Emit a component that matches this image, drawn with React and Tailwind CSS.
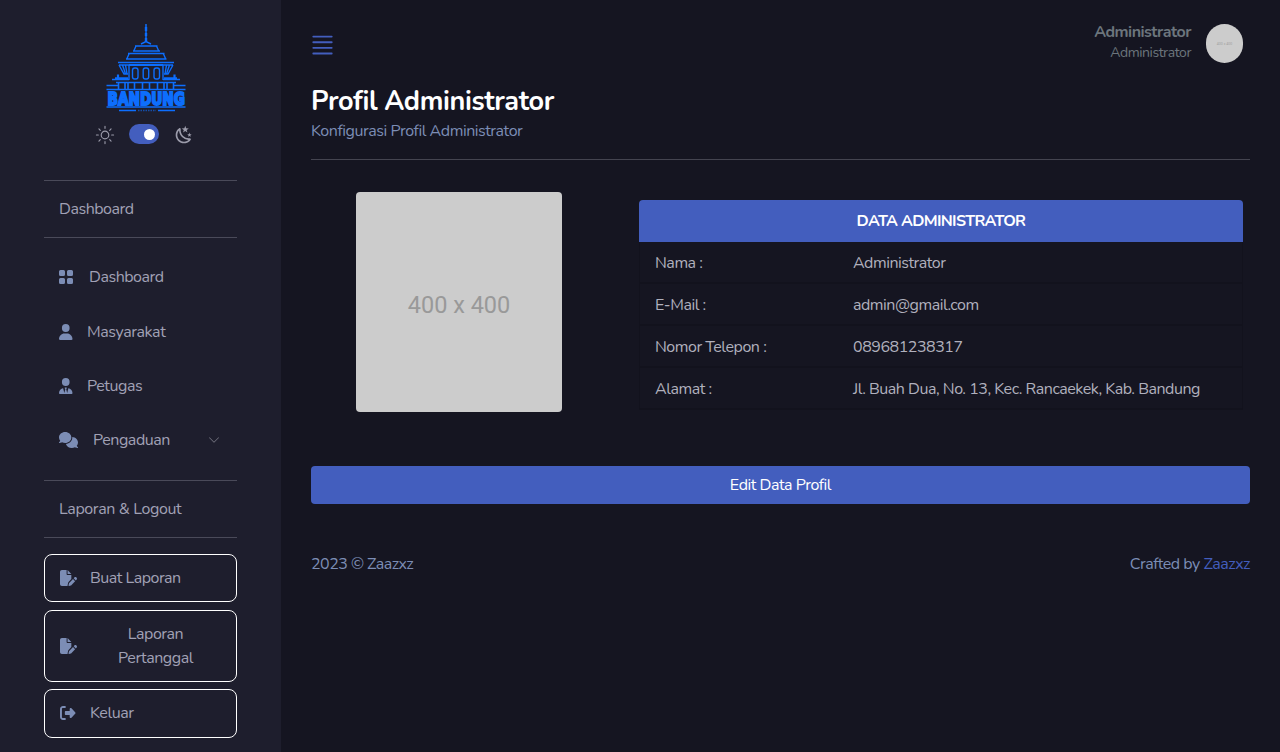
import React from "react";
import { BsGridFill, BsChevronDown, BsJustify } from "react-icons/bs";
import { FaUser, FaUserTie, FaComments, FaFilePen, FaRightFromBracket } from "react-icons/fa6";

function Logo() {
  return (
    <svg className="h-[88px] w-[82px] overflow-visible" viewBox="0 0 82 88" fill="none" stroke="#0d6efd" strokeWidth="1.4">
      <path d="M41 0v18" strokeWidth="1.5" />
      <path d="M41 3v4M41 9v3M41 14v4" strokeWidth="2.4" />
      <path d="M36 20l5-2.500l5 2.500M30 22h22.500M31 22l-2 4.500M51.500 22l2 4.500M28 27h27M23 29.500h36.500M24 30l-2 4.500M58.500 30l2 4.500M21 35h40.500" />
      <path d="M13 38.500h56M14 41h54M14 41l5 9h4M68 41l-5 9h-4M17.500 41l3 9M64.500 41l-3 9M20.500 41l1.500 9M61.500 41l-1.500 9M24 41v15M58 41v15" />
      <path d="M24 41h34" strokeWidth="2" />
      <rect x="27.500" y="44" width="5.500" height="11" rx="2.200" />
      <rect x="38.200" y="44" width="5.500" height="11" rx="2.200" />
      <rect x="49" y="44" width="5.500" height="11" rx="2.200" />
      <path d="M13 50.500v5M69.500 50.500v5" strokeWidth="2.200" />
      <path d="M10 54h13M59 54h13M7 55.500h17M58 55.500h17M11 58.500h60" strokeWidth="1.600" />
      <path d="M1.500 61.500h12M69 61.500h11.500M1.500 65.500h79" />
      <path d="M13.500 58v8M20 59v7M23 59v7M29.500 59v7M37.500 59v7M44.500 59v7M52.500 59v7M59 59v7M62 59v7M68.500 58v8" strokeWidth="1.600" />
      <text x="2.500" y="80.600" textLength="77.500" lengthAdjust="spacingAndGlyphs" fill="#0d6efd" strokeWidth="1.900" className="font-['DejaVu_Sans'] text-[17px] font-bold tracking-normal">BANDUNG</text>
      <path d="M1.500 83h79" strokeWidth="1.400" />
      <path d="M14 86.500h17M53 86.500h17" strokeWidth="1.400" />
      <path d="M33 86.500h18" strokeWidth="1.400" strokeDasharray="1.5 1" opacity=".6" />
    </svg>
  );
}

function Sun() {
  return (
    <svg className="h-5 w-5" viewBox="0 0 21 21" fill="none" stroke="currentColor" strokeWidth="1.2" strokeLinecap="round" strokeLinejoin="round">
      <path d="M10.500 14.500c2.219 0 4-1.763 4-3.982a4.003 4.003 0 0 0-4-4.018c-2.219 0-4 1.781-4 4c0 2.219 1.781 4 4 4zM4.136 4.136L5.550 5.550m9.900 9.900l1.414 1.414M1.500 10.500h2m14 0h2M4.135 16.863L5.550 15.450m9.899-9.900l1.414-1.415M10.500 19.500v-2m0-14v-2" />
    </svg>
  );
}

function Moon() {
  return (
    <svg className="h-5 w-5" viewBox="0 0 24 24" fill="currentColor">
      <path d="m17.750 4.090l-2.530 1.940l.91 3.060l-2.630-1.810l-2.630 1.810l.91-3.060l-2.530-1.940L12.440 4l1.060-3l1.060 3l3.190.09m3.500 6.910l-1.640 1.250l.59 1.980l-1.700-1.170l-1.700 1.170l.59-1.980L15.750 11l2.060-.05L18.500 9l.69 1.950l2.060.05m-2.280 4.950c.83-.08 1.720 1.100 1.190 1.850c-.32.45-.66.87-1.080 1.270C15.170 23 8.840 23 4.940 19.070c-3.910-3.900-3.910-10.240 0-14.140c.4-.4.82-.76 1.270-1.080c.75-.53 1.930.36 1.850 1.190c-.27 2.860.69 5.830 2.890 8.020a9.960 9.960 0 0 0 8.020 2.890m-1.640 2.020a12.080 12.080 0 0 1-7.800-3.470c-2.170-2.190-3.330-5-3.490-7.820c-2.810 3.140-2.700 7.960.31 10.980c3.020 3.010 7.840 3.120 10.980.31Z" />
    </svg>
  );
}

const rows = [
  ["Nama :", "Administrator"],
  ["E-Mail :", "admin@gmail.com"],
  ["Nomor Telepon :", "089681238317"],
  ["Alamat :", "Jl. Buah Dua, No. 13, Kec. Rancaekek, Kab. Bandung"],
];

export default function App() {
  return (
    <div className="flex h-[752px] w-[1280px] overflow-hidden bg-[#151521] font-['Nunito','Lato',sans-serif] text-base leading-6 tracking-[-0.47px] text-[#a1a1b5]">
      <aside className="flex h-full w-[281px] shrink-0 flex-col bg-[#1e1e2d] pr-11 pl-11">
        <div className="flex flex-col items-center pt-6 pl-[11px]">
          <Logo />
        </div>
        <div className="mt-3 ml-[51px] flex h-5 items-center text-[#9c9cab]">
          <span className="mt-px"><Sun /></span>
          <span className="ml-[14px] flex h-5 w-[30px] items-center justify-end rounded-full bg-[#435ebe] pr-1">
            <span className="h-[11px] w-[11px] rounded-full bg-white" />
          </span>
          <span className="mt-px ml-[14.5px]"><Moon /></span>
        </div>
        <div className="mt-9 flex h-[58px] items-center border-y border-[#4a4a59] pl-[15px]">Dashboard</div>
        <nav className="flex flex-col">
          <div className="mt-[27px] flex h-6 items-center pl-[14px]">
            <BsGridFill className="h-4 w-4 text-[#7c8db5]" />
            <span className="ml-[15px]">Dashboard</span>
          </div>
          <div className="mt-[31px] flex h-6 items-center pl-[15px]">
            <FaUser className="h-4 w-[13.5px] text-[#7c8db5]" preserveAspectRatio="none" />
            <span className="ml-[14.5px] tracking-[-0.4px]">Masyarakat</span>
          </div>
          <div className="mt-[30px] flex h-6 items-center pl-[15px]">
            <FaUserTie className="h-4 w-[13.5px] text-[#7c8db5]" preserveAspectRatio="none" />
            <span className="ml-[14.5px]">Petugas</span>
          </div>
          <div className="mt-[30px] flex h-6 items-center pr-[17px] pl-[15px]">
            <FaComments className="h-4 w-[19px] text-[#7c8db5]" preserveAspectRatio="none" />
            <span className="ml-[15px]">Pengaduan</span>
            <BsChevronDown className="ml-auto h-3 w-3 text-[#757582]" />
          </div>
        </nav>
        <div className="mt-7 flex h-[58px] shrink-0 items-center border-y border-[#4a4a59] pl-[15px] tracking-[-0.38px]">Laporan &amp; Logout</div>
        <div className="mt-4 flex h-12 shrink-0 items-center rounded-lg border border-white pl-[15px]">
          <FaFilePen className="h-4 w-[17px] text-[#7c8db5]" preserveAspectRatio="none" />
          <span className="ml-[13px] tracking-[-0.5px]">Buat Laporan</span>
        </div>
        <div className="mt-2 flex h-[72px] shrink-0 items-center rounded-lg border border-white pl-[15px]">
          <FaFilePen className="h-4 w-[17px] text-[#7c8db5]" preserveAspectRatio="none" />
          <span className="ml-[27px] w-[103px] text-center">Laporan Pertanggal</span>
        </div>
        <div className="mt-[7px] flex h-[49px] shrink-0 items-center rounded-lg border border-white pb-px pl-[15px]">
          <FaRightFromBracket className="h-4 w-[15.5px] text-[#7c8db5]" preserveAspectRatio="none" />
          <span className="ml-[14.5px]">Keluar</span>
        </div>
      </aside>

      <main className="flex flex-1 flex-col pr-[30px] pl-[30px]">
        <header className="flex h-[87px] shrink-0 items-center justify-between pr-[7px] pb-px">
          <BsJustify className="mt-1 -ml-0.5 h-[30px] w-[27px] text-[#435ebe]" preserveAspectRatio="none" />
          <div className="flex items-center">
            <div className="mb-0.5 flex flex-col text-right text-[#6c757d]">
              <span className="text-base leading-5 font-bold tracking-[-0.5px]">Administrator</span>
              <span className="text-sm leading-[21px] tracking-[-0.42px]">Administrator</span>
            </div>
            <div className="ml-[15px] flex h-[39px] w-[37px] items-center justify-center rounded-full bg-[#ccc] pt-0.5 font-['Roboto'] text-[3.5px] tracking-normal text-[#a0a0a0]">400 x 400</div>
          </div>
        </header>
        <h1 className="text-[27px] leading-[30px] font-bold tracking-[-0.36px] text-white">Profil Administrator</h1>
        <p className="mt-0.5 tracking-[-0.45px] text-[#7c8db5]">Konfigurasi Profil Administrator</p>
        <hr className="mt-4 border-[#444450]" />
        <section className="flex">
          <div className="mt-8 ml-[45px] flex h-[220px] w-[206px] items-center justify-center rounded bg-[#ccc] pt-[5px] font-['Roboto'] text-[23.5px] tracking-normal text-[#999]">400 x 400</div>
          <div className="mt-10 ml-[77px] w-[604px] overflow-hidden rounded">
            <div className="flex h-[42px] items-center justify-center bg-[#435ebe] font-bold tracking-[-0.65px] text-white">DATA ADMINISTRATOR</div>
            {rows.map(([label, value]) => (
              <div key={label} className="flex h-[42px] items-center border-x border-b-2 border-[#12121d] pt-0.5 pl-[15px] text-[#b0b0bd]">
                <span className="w-[198px]">{label}</span>
                <span className="whitespace-nowrap">{value}</span>
              </div>
            ))}
          </div>
        </section>
        <button className="mt-[54px] h-[38px] shrink-0 rounded bg-[#435ebe] text-white">Edit Data Profil</button>
        <footer className="mt-12 flex justify-between text-[#7c8db5]">
          <span className="tracking-[-0.52px]">2023 © Zaazxz</span>
          <span>Crafted by <a className="text-[#435ebe]">Zaazxz</a></span>
        </footer>
      </main>
    </div>
  );
}
